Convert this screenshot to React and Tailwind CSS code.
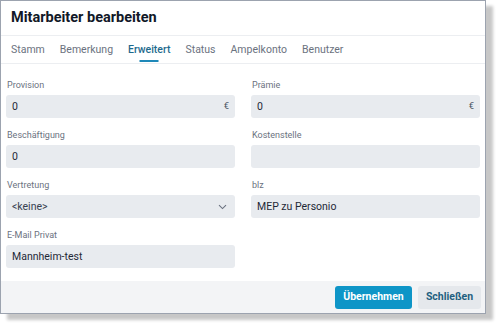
import React, { useState } from "react";

const tabs = ["Stamm", "Bemerkung", "Erweitert", "Status", "Ampelkonto", "Benutzer"];

const Field = ({ label, value, suffix, select }) => (
  <div className="flex flex-col">
    <label className="h-[16px] leading-[16px] text-[9px] text-[#6b7280] pl-[1px]">{label}</label>
    <div className="mt-[2px] h-[23px] rounded-[3px] bg-[#e8ebef] flex items-center px-[6px] text-[10.5px] text-[#1f2937]">
      <span className={`flex-1 ${select ? "text-[#374151]" : ""}`}>{value}</span>
      {suffix && <span className="text-[9.5px] text-[#4b5563]">{suffix}</span>}
      {select && (
        <svg width="9" height="6" viewBox="0 0 9 6" className="mr-[2px]">
          <path d="M1 1.2 L4.5 4.6 L8 1.2" fill="none" stroke="#6b7280" strokeWidth="1.1" />
        </svg>
      )}
    </div>
  </div>
);

export default function App() {
  const [active, setActive] = useState("Erweitert");

  return (
    <div className="w-[500px] h-[327px] bg-white" style={{ fontFamily: "Roboto, 'Liberation Sans', sans-serif" }}>
      <div className="w-[486px] h-[314px] border border-[#9ca3af] bg-white shadow-[7px_6px_3px_rgba(0,0,0,0.22)] flex flex-col">
        <div className="h-[35px] flex items-center px-[10px] border-b border-[#eceef1]">
          <h1 className="text-[14.5px] font-bold text-[#111827]">Mitarbeiter bearbeiten</h1>
        </div>

        <div className="h-[28px] flex items-stretch gap-[15px] px-[10px] border-b border-[#eceef1]">
          {tabs.map((t) => (
            <button
              key={t}
              onClick={() => setActive(t)}
              className={`relative flex items-center text-[10.5px] ${
                active === t ? "text-[#1e6a8d] font-medium" : "text-[#6b7280]"
              }`}
            >
              {t}
              {active === t && (
                <span className="absolute bottom-[1px] left-1/2 -translate-x-1/2 w-[19px] h-[2px] bg-[#1e88b8]" />
              )}
            </button>
          ))}
        </div>

        <div className="flex-1 px-[5px] pt-[13px] grid grid-cols-2 gap-x-[16px] gap-y-[9px] content-start">
          <Field label="Provision" value="0" suffix="€" />
          <Field label="Prämie" value="0" suffix="€" />
          <Field label="Beschäftigung" value="0" />
          <Field label="Kostenstelle" value="" />
          <Field label="Vertretung" value="<keine>" select />
          <Field label="blz" value="MEP zu Personio" />
          <Field label="E-Mail Privat" value="Mannheim-test" />
        </div>

        <div className="h-[32px] bg-[#f3f4f6] flex items-center justify-end gap-[6px] px-[4px]">
          <button className="h-[23px] w-[77px] rounded-[3px] bg-[#0e95c7] text-white text-[10.5px] font-bold">
            Übernehmen
          </button>
          <button className="h-[23px] w-[63px] rounded-[3px] bg-[#e5e8ec] text-[#1f5f80] text-[10.5px] font-bold">
            Schließen
          </button>
        </div>
      </div>
    </div>
  );
}
